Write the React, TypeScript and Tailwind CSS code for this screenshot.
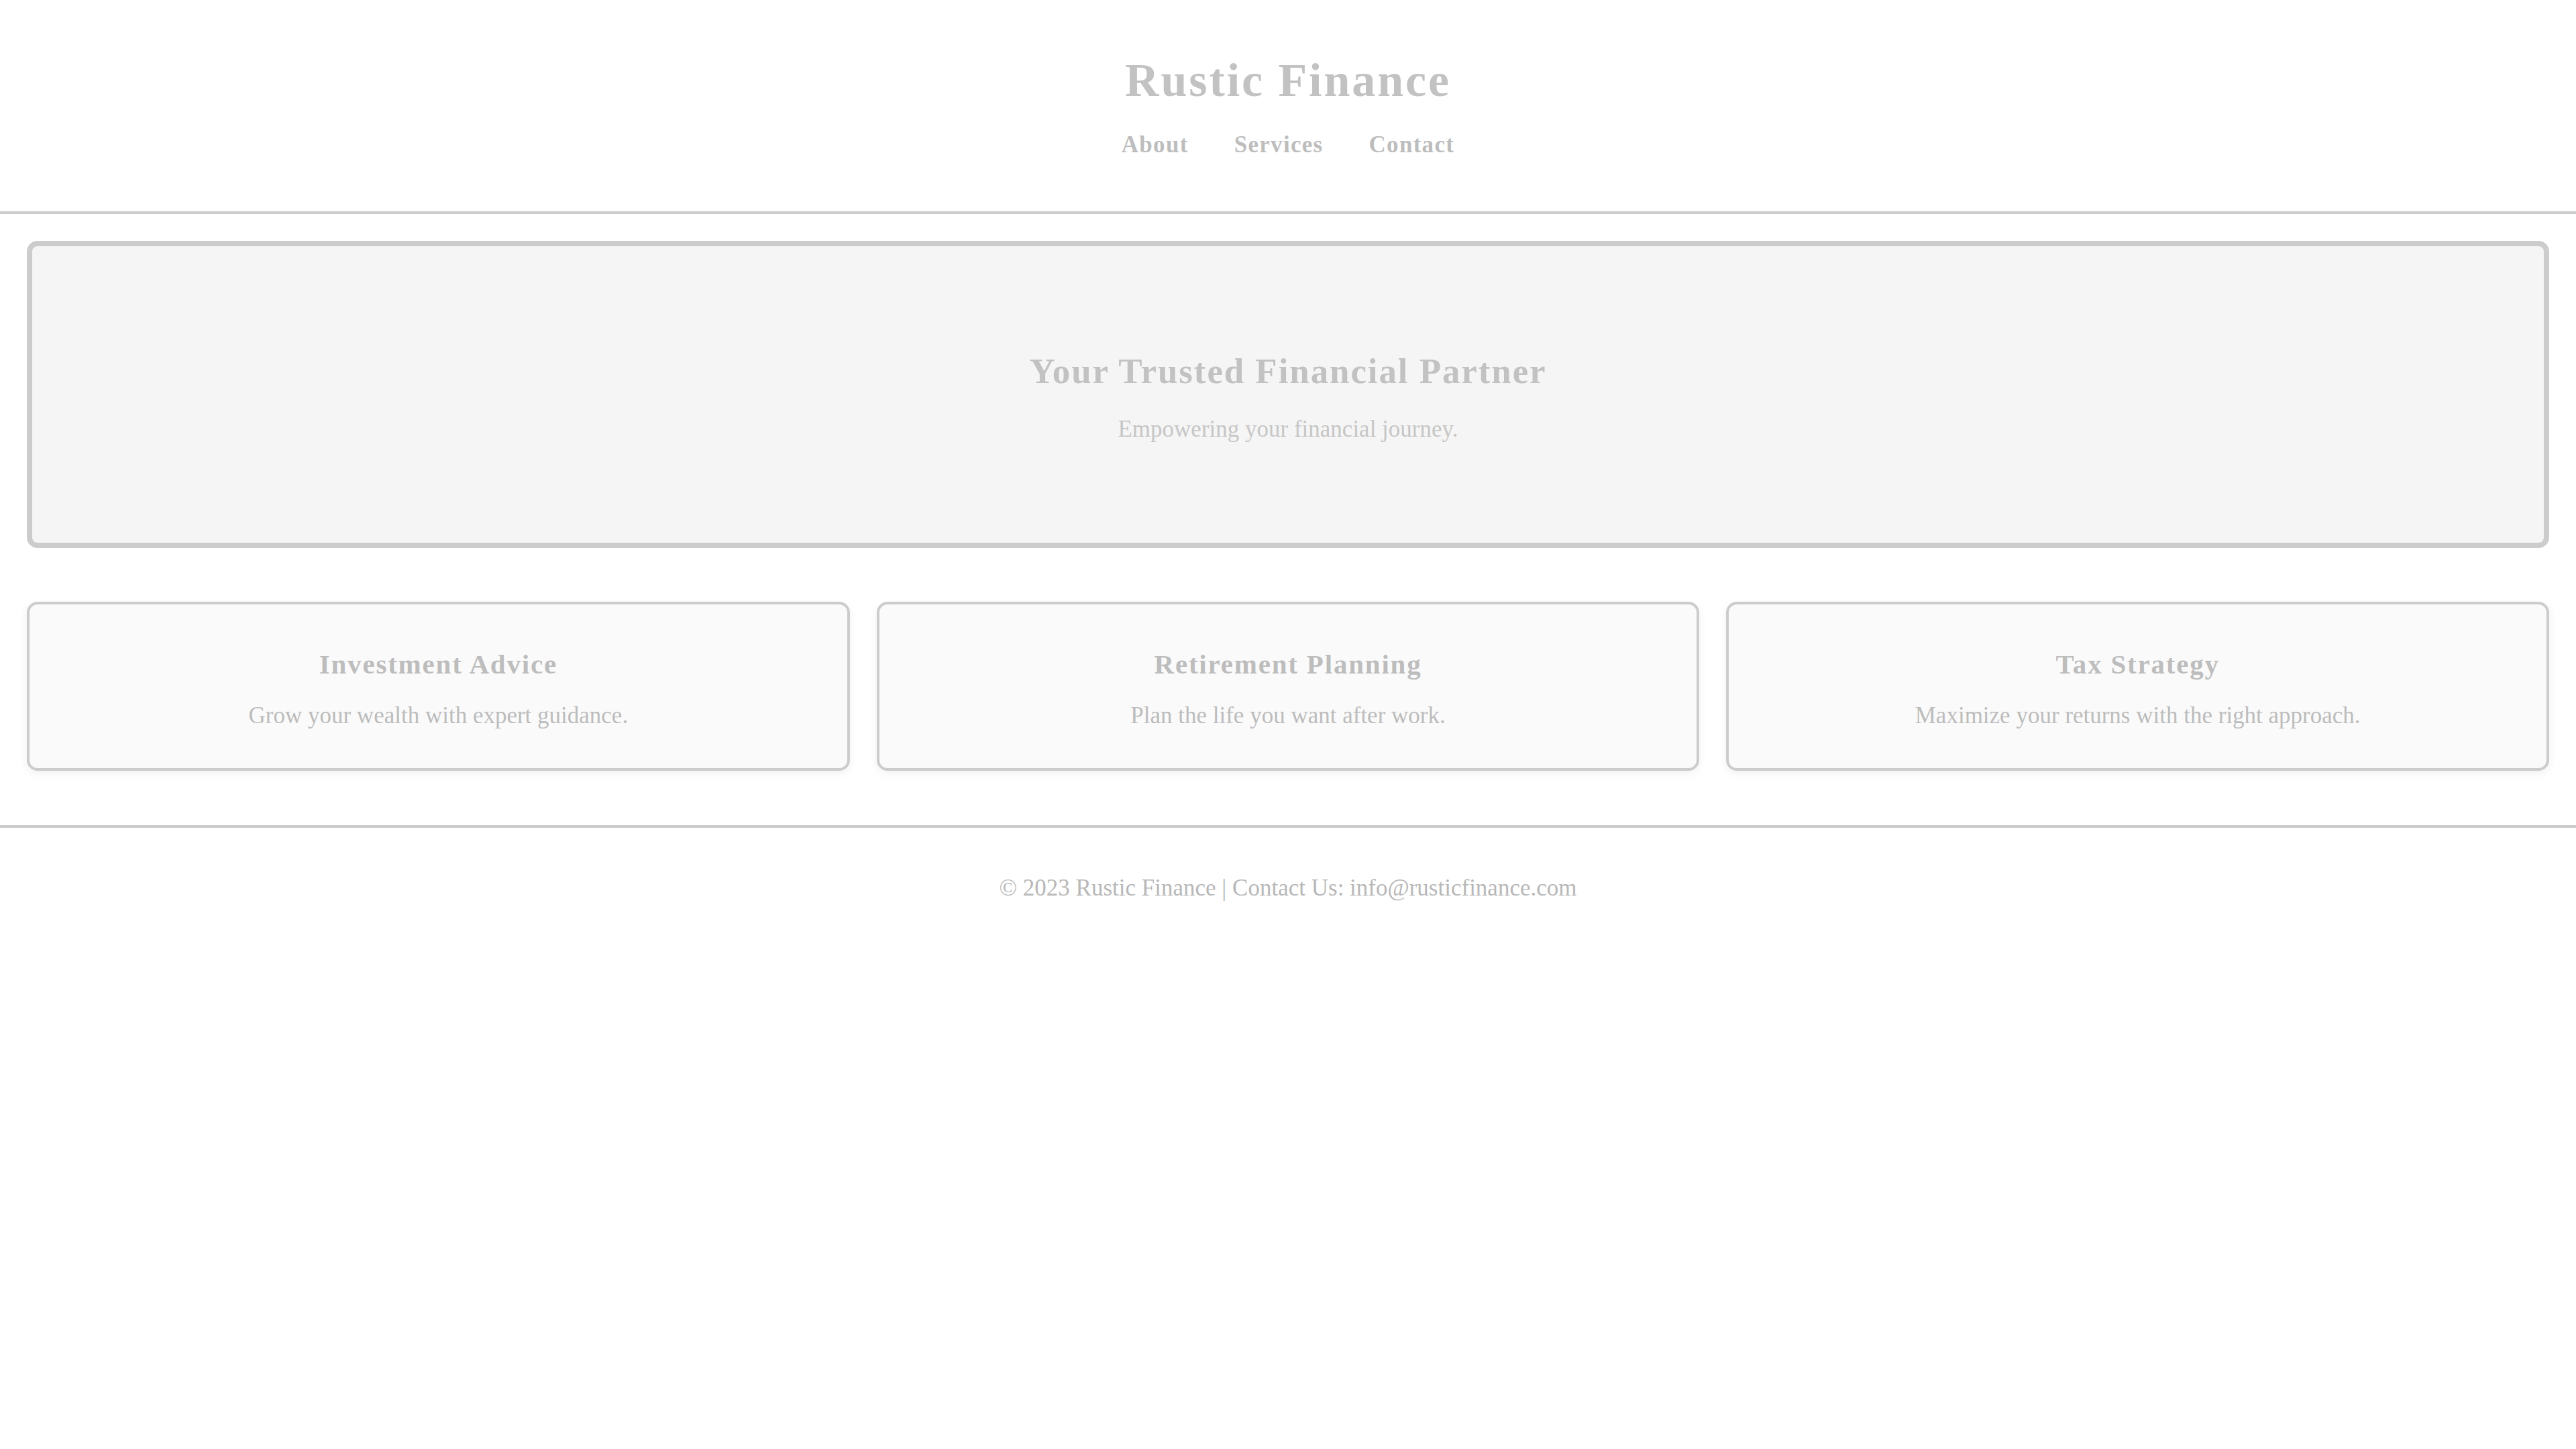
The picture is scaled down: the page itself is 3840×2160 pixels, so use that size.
import React from "react";

const serif = { fontFamily: '"Liberation Serif", "Times New Roman", serif' };

function Card({ title, text }: { title: string; text: string }) {
  return (
    <div className="flex-1 rounded-2xl border-4 border-[#cccccc] bg-[#fafafa] pt-[65px] pb-[58px] text-center shadow-[0_4px_14px_rgba(0,0,0,0.06)]">
      <h3 className="text-[41px] leading-[48px] font-bold tracking-[1.8px] text-[#bdbdbd]">{title}</h3>
      <p className="mt-[33px] text-[35px] leading-[40px] text-[#bcbcbc]">{text}</p>
    </div>
  );
}

export default function App() {
  return (
    <div className="min-h-screen w-full bg-white" style={serif}>
      <header className="border-b-4 border-[#cccccc] pt-[80px] pb-[79px] text-center">
        <h1 className="text-[70px] leading-[80px] font-bold tracking-[2.9px] text-[#c2c2c2]">Rustic Finance</h1>
        <nav className="mt-[36px] flex justify-center gap-[68px] text-[35px] leading-[40px] font-bold tracking-[1.3px] text-[#bdbdbd]">
          <a>About</a>
          <a>Services</a>
          <a>Contact</a>
        </nav>
      </header>

      <main className="px-[40px]">
        <section className="mt-[40px] rounded-2xl border-8 border-[#cccccc] bg-[#f5f5f5] pt-[156px] pb-[149px] text-center">
          <h2 className="text-[53px] leading-[60px] font-bold tracking-[1.9px] text-[#c2c2c2]">Your Trusted Financial Partner</h2>
          <p className="mt-[37px] text-[35px] leading-[40px] text-[#c6c6c6]">Empowering your financial journey.</p>
        </section>

        <section className="mt-[80px] flex gap-[40px]">
          <Card title="Investment Advice" text="Grow your wealth with expert guidance." />
          <Card title="Retirement Planning" text="Plan the life you want after work." />
          <Card title="Tax Strategy" text="Maximize your returns with the right approach." />
        </section>
      </main>

      <footer className="mt-[81px] border-t-4 border-[#cccccc] pt-[70px] pb-[60px] text-center">
        <p className="text-[35px] leading-[40px] text-[#b8b8b8]">© 2023 Rustic Finance | Contact Us: info@rusticfinance.com</p>
      </footer>
    </div>
  );
}
